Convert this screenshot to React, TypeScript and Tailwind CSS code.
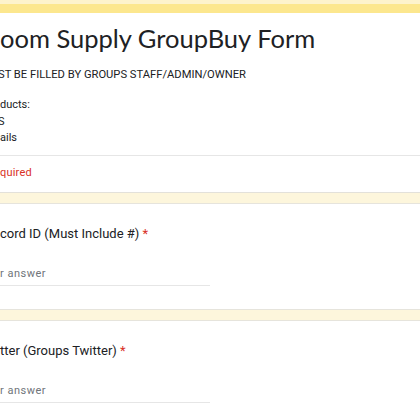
export default function App() {
  return (
    <div className="w-[420px] h-[420px] overflow-hidden bg-[#fdf6dc] font-['Roboto',sans-serif] text-[#202124]">
      <div className="flex flex-col gap-[10px]">
        {/* Header card */}
        <div className="bg-white border-b border-[#e3e1da]">
          <div className="h-[4px] bg-[#fdf3cc]" />
          <div className="h-[9px] bg-[#fce78e]" />
          <div className="pt-[7px] pb-[8px] border-b border-[#e6e6e6]">
            <h1 className="font-['Lato',sans-serif] text-[25.5px] leading-[36px]">
              oom Supply GroupBuy Form
            </h1>
            <p className="mt-[11px] text-[11.2px] leading-[16px] -ml-[2px]">
              ST BE FILLED BY GROUPS STAFF/ADMIN/OWNER
            </p>
            <div className="mt-[14px] text-[11px] leading-[16.5px]">
              <p>ducts:</p>
              <p className="-ml-[2px]">S</p>
              <p>ails</p>
            </div>
          </div>
          <div className="h-[36px] flex items-center text-[11px] tracking-[0.2px] text-[#d93025]">quired</div>
        </div>

        <Question label="cord ID (Must Include #)" />
        <Question label="tter (Groups Twitter)" />
      </div>
    </div>
  );
}

function Question({ label }: { label: string }) {
  return (
    <div className="bg-white border-y border-[#e6e4dc] pt-[20px] pb-[23px]">
      <p className="text-[13px] leading-[20px]">
        {label} <span className="text-[#d93025]">*</span>
      </p>
      <div className="mt-[22px] w-[210px] border-b border-[#e6e6e6] pb-[3px] text-[11px] leading-[16px] tracking-[0.5px] text-[#70757a]">
        r answer
      </div>
    </div>
  );
}
